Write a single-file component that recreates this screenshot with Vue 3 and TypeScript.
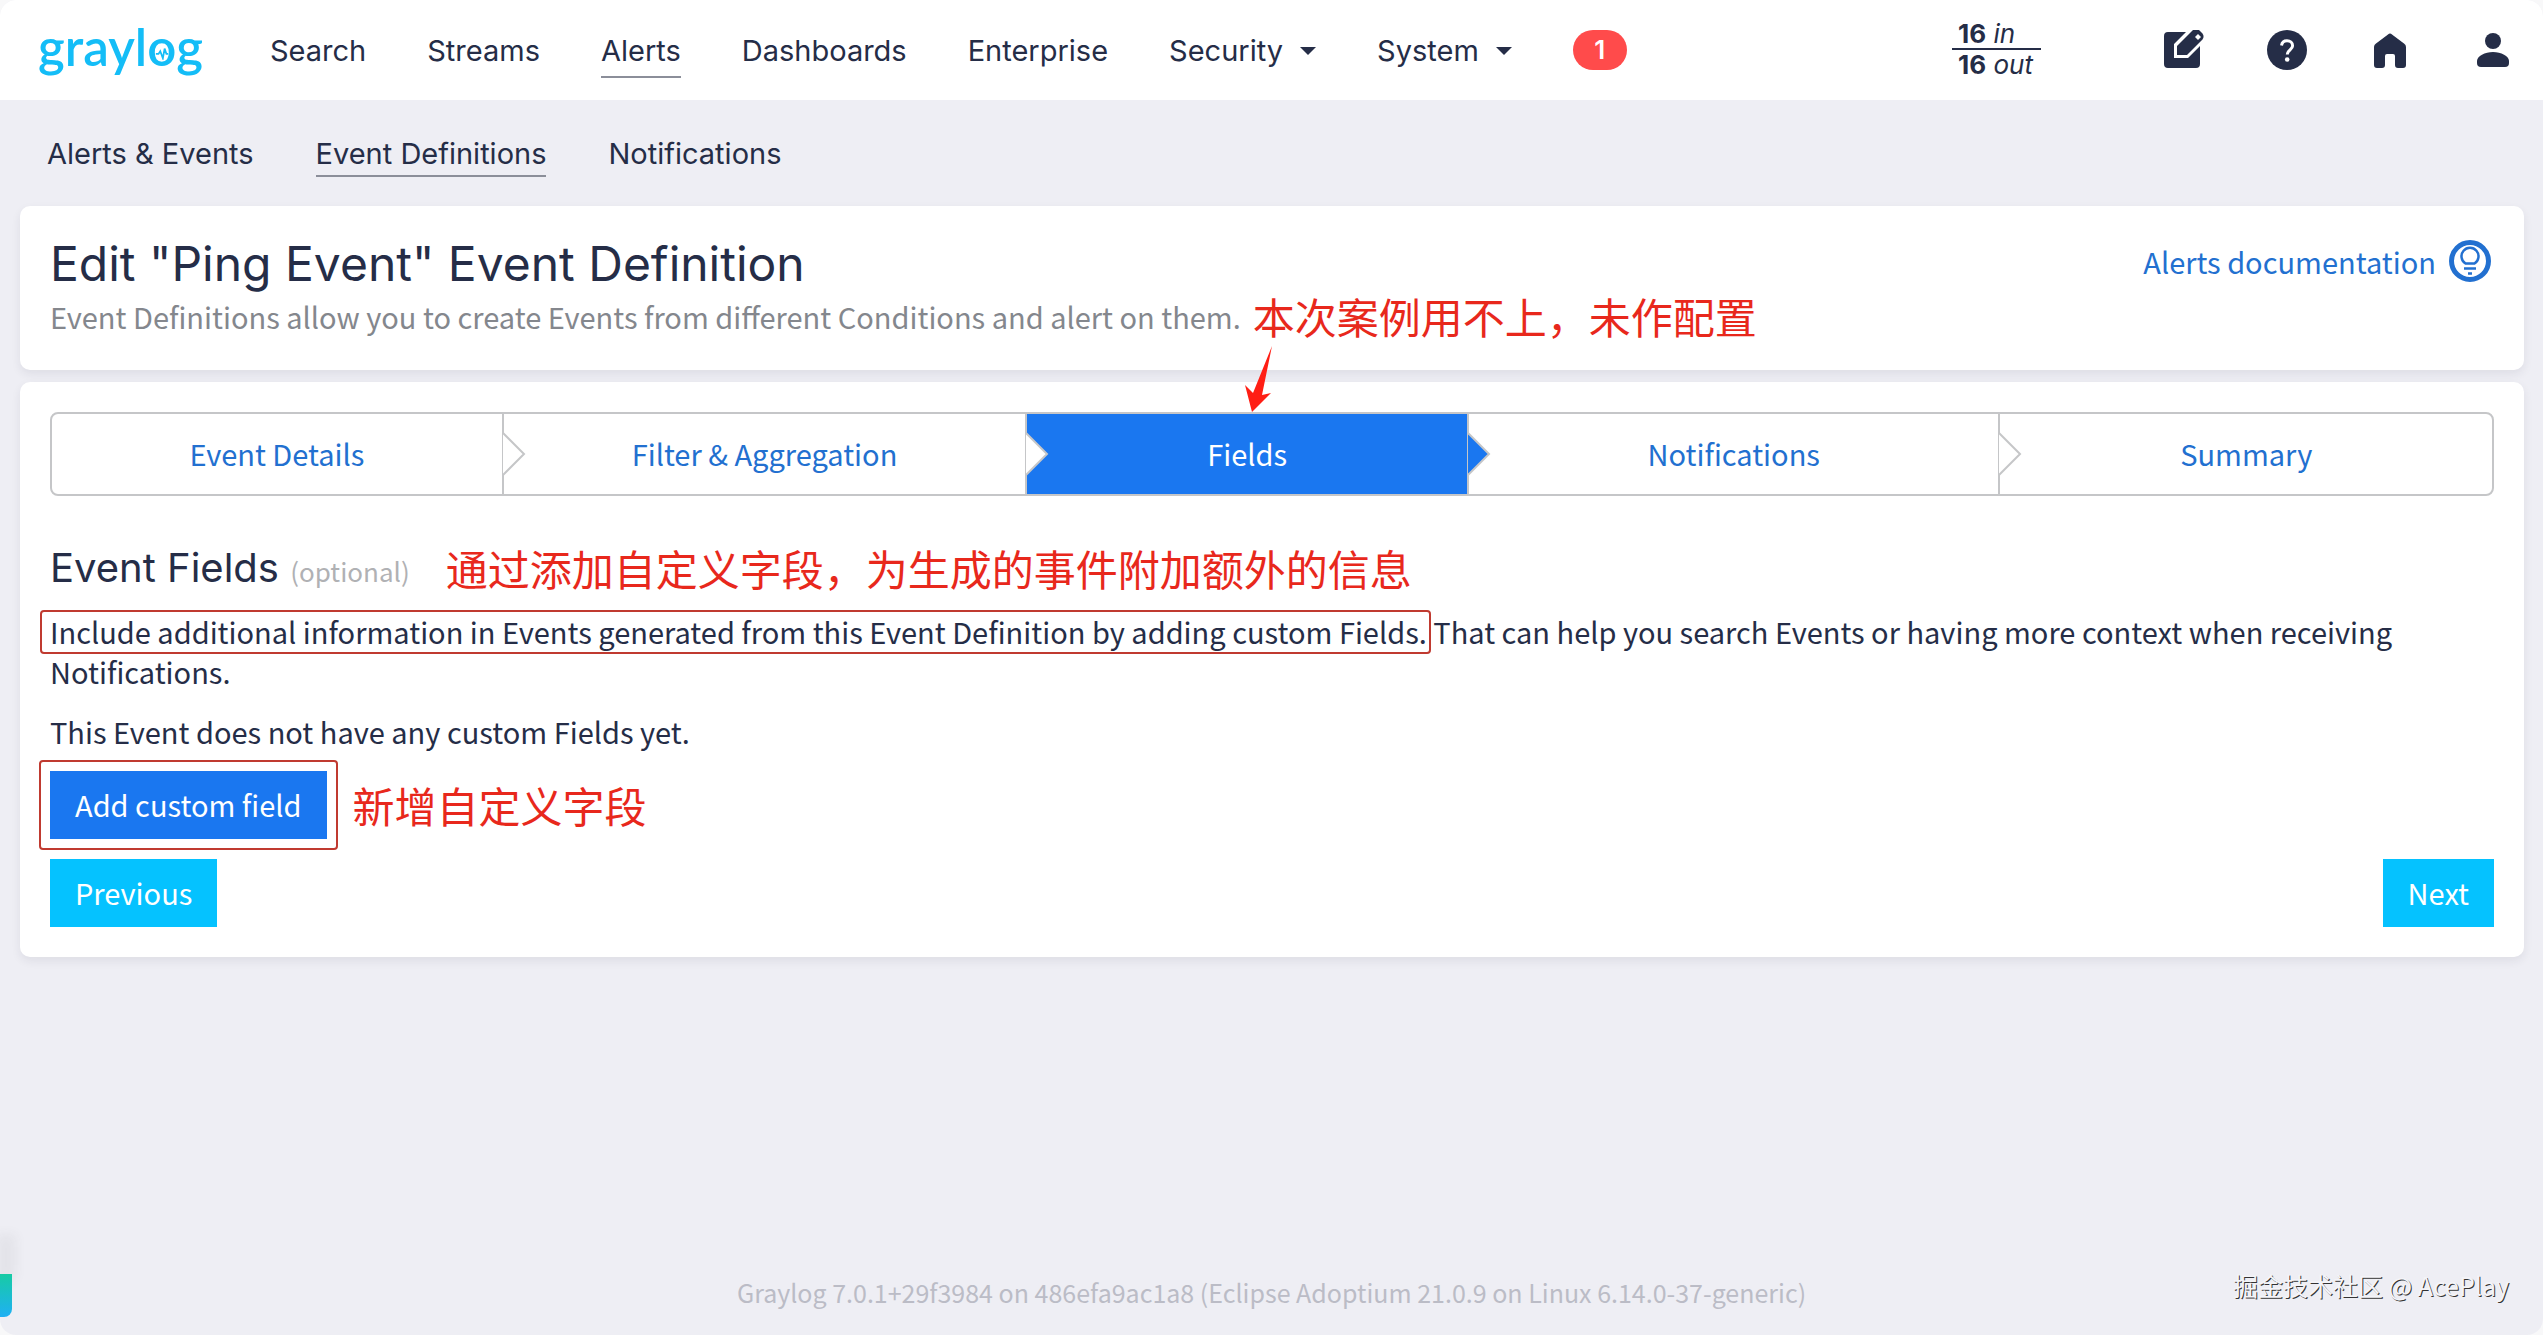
<script setup lang="ts">
interface NavItem {
  label: string
  active?: boolean
  menu?: boolean
}

interface Step {
  label: string
  share: number
  active?: boolean
}

const mainNav: NavItem[] = [
  { label: 'Search' },
  { label: 'Streams' },
  { label: 'Alerts', active: true },
  { label: 'Dashboards' },
  { label: 'Enterprise' },
  { label: 'Security', menu: true },
  { label: 'System', menu: true },
]

const subNav: NavItem[] = [
  { label: 'Alerts & Events' },
  { label: 'Event Definitions', active: true },
  { label: 'Notifications' },
]

const steps: Step[] = [
  { label: 'Event Details', share: 452 },
  { label: 'Filter & Aggregation', share: 524 },
  { label: 'Fields', share: 442, active: true },
  { label: 'Notifications', share: 532 },
  { label: 'Summary', share: 494 },
]
</script>

<template>
  <div class="page">
    <header class="topbar">
      <a class="logo" href="#" aria-label="graylog">
        <span>grayl</span><span class="logo-o">o<svg viewBox="0 0 16 16" aria-hidden="true"><path d="M1 9h3l2-3 3 8 2-11 2 6h2" /></svg></span><span>g</span>
      </a>
      <nav class="main-nav" aria-label="Main">
        <a v-for="item in mainNav" :key="item.label" href="#" class="nav-link" :class="{ active: item.active }">
          <span>{{ item.label }}</span>
          <svg v-if="item.menu" class="caret" viewBox="0 0 16 8" aria-hidden="true"><path d="M0 0h16l-8 8z" /></svg>
        </a>
        <a class="badge" href="#">1</a>
      </nav>
      <div class="tools">
        <a class="throughput" href="#">
          <span><b>16</b> <i>in</i></span>
          <span><b>16</b> <i>out</i></span>
        </a>
        <button type="button" class="icon-button" aria-label="Scratchpad">
          <svg viewBox="0 0 40 40">
            <path d="M4 2h18L10 14v14h14l12-12v18a4 4 0 0 1-4 4H4a4 4 0 0 1-4-4V6a4 4 0 0 1 4-4z" />
            <path d="M13 16 27 2l2-2c2-1 4-1 6 0l3 3c2 2 2 5 0 7L23 25H13z" />
            <path class="cut" d="m31 7 3-3 3 3-3 3z" />
          </svg>
        </button>
        <button type="button" class="icon-button" aria-label="Help">
          <svg viewBox="0 0 40 40">
            <circle cx="20" cy="20" r="20" />
            <path class="line" d="M14.500 15.500c.5-3 2.500-4.700 5.500-4.700 3.300 0 5.600 2 5.600 4.900 0 4-5.300 4.300-5.300 8.800" />
            <circle class="cut" cx="20.200" cy="29.500" r="2.300" />
          </svg>
        </button>
        <button type="button" class="icon-button" aria-label="Home">
          <svg viewBox="0 0 40 40">
            <path d="M18 4.500a3 3 0 0 1 4 0l12 9a4 4 0 0 1 2 3.500v18a3 3 0 0 1-3 3h-5a3 3 0 0 1-3-3V26a2 2 0 0 0-2-2h-6a2 2 0 0 0-2 2v9a3 3 0 0 1-3 3H7a3 3 0 0 1-3-3V17a4 4 0 0 1 2-3.500z" />
          </svg>
        </button>
        <button type="button" class="icon-button" aria-label="User menu">
          <svg viewBox="0 0 40 40">
            <circle cx="20" cy="11" r="8" />
            <path d="M4 31c0-5 8-9 16-9s16 4 16 9v2a4 4 0 0 1-4 4H8a4 4 0 0 1-4-4z" />
          </svg>
        </button>
      </div>
    </header>

    <nav class="sub-nav" aria-label="Alerts">
      <a v-for="item in subNav" :key="item.label" href="#" class="nav-link" :class="{ active: item.active }">{{ item.label }}</a>
    </nav>

    <main class="content">
      <section class="card intro">
        <div>
          <h1>Edit "Ping Event" Event Definition</h1>
          <div class="subtitle">
            <p>Event Definitions allow you to create Events from different Conditions and alert on them.</p>
            <span class="note">本次案例用不上，未作配置
              <svg class="arrow" viewBox="0 0 28 66" aria-hidden="true"><path d="M27 0 17 49l9-2L7 66 0 39l8 8z" /></svg>
            </span>
          </div>
        </div>
        <a class="docs" href="#">
          Alerts documentation
          <svg viewBox="0 0 42 42" aria-hidden="true">
            <circle cx="21" cy="21" r="18.500" stroke-width="5" />
            <path d="M16.500 23.500a8.500 8.500 0 1 1 9 0z" stroke-width="2.500" />
            <path d="M15 28.500h12" stroke-width="2.500" />
            <path d="M19 33.500h4" stroke-width="2.500" />
          </svg>
        </a>
      </section>

      <section class="card">
        <nav class="steps" aria-label="Steps">
          <a v-for="step in steps" :key="step.label" href="#" class="step" :class="{ active: step.active }" :style="{ flexGrow: step.share }">
            {{ step.label }}
            <svg class="tip" viewBox="0 0 24 44" aria-hidden="true"><path d="M1 1 22 22 1 43" /></svg>
          </a>
        </nav>

        <div class="heading">
          <h2>Event Fields <small>(optional)</small></h2>
          <span class="note">通过添加自定义字段，为生成的事件附加额外的信息</span>
        </div>

        <p class="text">
          <span class="marked">Include additional information in Events generated from this Event Definition by adding custom Fields.</span>
          That can help you search Events or having more context when receiving Notifications.
        </p>
        <p class="text">This Event does not have any custom Fields yet.</p>

        <div class="add-row">
          <span class="marked-button"><button type="button" class="button primary">Add custom field</button></span>
          <span class="note">新增自定义字段</span>
        </div>
        <div class="pager">
          <button type="button" class="button info">Previous</button>
          <button type="button" class="button info">Next</button>
        </div>
      </section>
    </main>

    <footer class="footer">Graylog 7.0.1+29f3984 on 486efa9ac1a8 (Eclipse Adoptium 21.0.9 on Linux 6.14.0-37-generic)</footer>
    <span class="watermark">掘金技术社区 @ AcePlay</span>
    <span class="edge-tab"></span>
  </div>
</template>

<style>
body {
  margin: 0;
  background: #f8f8f9;
}
</style>

<style scoped>
.page {
  position: relative;
  box-sizing: border-box;
  min-height: 100vh;
  display: flex;
  flex-direction: column;
  overflow: hidden;
  border-radius: 16px;
  background: #eeeef4;
  color: #252d47;
  font-family: "Noto Sans CJK SC", "Noto Sans", sans-serif;
  font-size: 29px;
  line-height: 40px;
}

a {
  color: inherit;
  text-decoration: none;
}

h1,
h2,
p {
  margin: 0;
  font-weight: 400;
}

.topbar {
  display: flex;
  align-items: center;
  height: 100px;
  padding: 0 30px 0 38px;
  background: #fff;
}

.logo {
  display: flex;
  width: 164px;
  margin-right: 68px;
  padding-bottom: 6px;
  color: #14bdf7;
  font: 600 51px/64px Lato, sans-serif;
}

.logo-o {
  position: relative;
}

.logo-o svg {
  position: absolute;
  left: 8px;
  top: 31px;
  width: 14px;
  height: 14px;
  fill: none;
  stroke: currentColor;
  stroke-width: 2;
}

.main-nav,
.sub-nav {
  display: flex;
  align-items: center;
  gap: 61px;
  font-family: Inter, sans-serif;
}

.nav-link {
  display: flex;
  align-items: center;
  gap: 17px;
  padding-bottom: 1px;
  border-bottom: 2px solid transparent;
}

.main-nav .nav-link {
  padding: 6px 0 2px;
  line-height: 46px;
}

.nav-link.active {
  border-color: #8b8e99;
}

.caret {
  width: 16px;
  height: 8px;
  fill: #252d47;
}

.badge {
  width: 54px;
  border-radius: 20px;
  background: #ff4b4b;
  color: #fff;
  font-weight: 600;
  font-size: 26px;
  text-align: center;
}

.tools {
  display: flex;
  align-items: center;
  gap: 63px;
  margin-left: auto;
}

.throughput {
  display: flex;
  flex-direction: column;
  width: 89px;
  margin-right: 60px;
  padding-bottom: 2px;
  font: 26px/29px Inter, sans-serif;
}

.throughput span {
  padding-left: 6px;
}

.throughput span:first-child {
  border-bottom: 2px solid #252d47;
}

.icon-button {
  width: 40px;
  height: 40px;
  padding: 0;
  border: 0;
  background: none;
}

.icon-button svg {
  display: block;
  width: 40px;
  height: 40px;
  fill: #252d47;
}

.icon-button .cut {
  fill: #fff;
}

.icon-button .line {
  fill: none;
  stroke: #fff;
  stroke-width: 3;
}

.sub-nav {
  gap: 62px;
  padding: 34px 47px 0;
}

.content {
  display: flex;
  flex-direction: column;
  gap: 12px;
  padding: 29px 19px 0 20px;
}

.card {
  padding: 30px;
  border-radius: 10px;
  background: #fff;
  box-shadow: 0 4px 10px rgba(40, 40, 60, 0.08);
}

.intro {
  display: flex;
  justify-content: space-between;
  align-items: flex-start;
}

h1 {
  font: 400 48px/56px Inter, sans-serif;
}

.subtitle {
  display: flex;
  align-items: center;
  gap: 12px;
  color: #84878d;
}

.note {
  position: relative;
  color: #e8281c;
  font-size: 42px;
  line-height: 48px;
}

.arrow {
  position: absolute;
  left: -8px;
  top: 54px;
  width: 28px;
  height: 66px;
  fill: #ff1e14;
}

.docs {
  display: flex;
  align-items: center;
  gap: 13px;
  padding: 4px 3px 0 0;
  color: #2270d0;
}

.docs svg {
  width: 42px;
  height: 42px;
  fill: none;
  stroke: currentColor;
}

.steps {
  display: flex;
  border: 2px solid #c5c6c8;
  border-radius: 8px;
  line-height: 78px;
}

.step {
  position: relative;
  flex: 1 1 0;
  padding-bottom: 2px;
  color: #2270d0;
  text-align: center;
}

.step + .step {
  border-left: 2px solid #c5c6c8;
}

.step.active {
  background: #1a77f0;
  color: #fff;
}

.tip {
  position: absolute;
  z-index: 1;
  right: -24px;
  top: 18px;
  width: 24px;
  height: 44px;
  fill: #fff;
  stroke: #c5c6c8;
  stroke-width: 2;
}

.step.active .tip {
  fill: #1a77f0;
}

.step:last-child .tip {
  display: none;
}

.heading {
  display: flex;
  align-items: center;
  gap: 36px;
  margin: 48px 0 19px;
}

h2 {
  font: 400 40px/48px Inter, sans-serif;
}

small {
  color: #b0b1b4;
  font: 26px/40px "Noto Sans CJK SC", sans-serif;
}

.text {
  margin: 16px 0 20px;
}

.marked {
  position: relative;
}

.marked::after {
  content: "";
  position: absolute;
  inset: 0 -4px -2px -10px;
  border: 2px solid #c03a30;
  border-radius: 4px;
}

.add-row {
  display: flex;
  align-items: center;
  gap: 26px;
}

.marked-button {
  position: relative;
}

.marked-button::after {
  content: "";
  position: absolute;
  inset: -11px;
  border: 2px solid #c03a30;
  border-radius: 4px;
  pointer-events: none;
}

.button {
  display: block;
  padding: 13px 25px 15px;
  border: 0;
  color: #fff;
  font: inherit;
}

.primary {
  background: #1a77f0;
}

.info {
  background: #05c2ff;
}

.pager {
  display: flex;
  justify-content: space-between;
  margin-top: 20px;
}

.footer {
  margin-top: auto;
  padding: 0 0 23px;
  color: #bbbcc6;
  font-size: 25px;
  text-align: center;
}

.watermark {
  position: absolute;
  right: 34px;
  bottom: 30px;
  color: #f4f4f8;
  font-size: 25px;
  text-shadow: 1px 1px 0 #333;
}

.edge-tab {
  position: absolute;
  left: 0;
  bottom: 18px;
  width: 12px;
  height: 43px;
  border-radius: 0 0 8px 0;
  background: linear-gradient(#17cba4, #1fb0f4);
  box-shadow: 0 -36px 12px 4px rgba(60, 60, 60, 0.06);
}
</style>
